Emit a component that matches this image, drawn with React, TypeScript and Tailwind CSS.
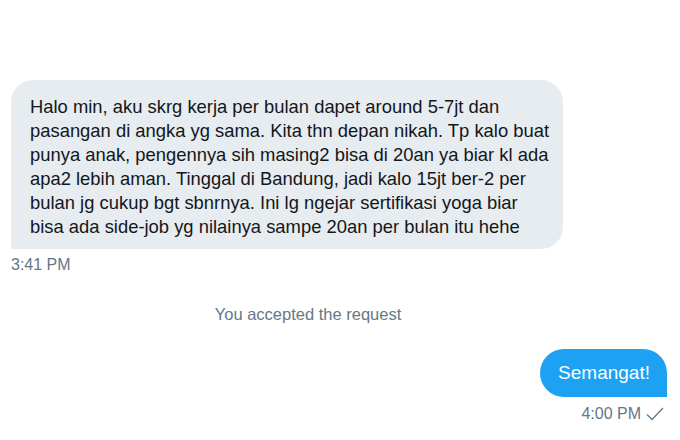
import React from "react";

const FONT = { fontFamily: '"Liberation Sans", Arial, sans-serif' };

const lines = [
  "Halo min, aku skrg kerja per bulan dapet around 5-7jt dan",
  "pasangan di angka yg sama. Kita thn depan nikah. Tp kalo buat",
  "punya anak, pengennya sih masing2 bisa di 20an ya biar kl ada",
  "apa2 lebih aman. Tinggal di Bandung, jadi kalo 15jt ber-2 per",
  "bulan jg cukup bgt sbnrnya. Ini lg ngejar sertifikasi yoga biar",
  "bisa ada side-job yg nilainya sampe 20an per bulan itu hehe",
];

export default function App() {
  return (
    <div className="w-[680px] h-[440px] bg-white overflow-hidden" style={FONT}>
      <div className="flex flex-col pt-[80px] px-[11px]">
        {/* Incoming message */}
        <div className="flex flex-col items-start">
          <div className="w-[552px] bg-[#e6ecf0] text-[#14171a] rounded-[22px] rounded-bl-none pl-[19px] pr-[10px] pt-[15px] pb-[10px] text-[18.4px] leading-[24px]">
            {lines.map((l) => (
              <div key={l} className="whitespace-nowrap">{l}</div>
            ))}
          </div>
          <div className="mt-[7px] text-[16px] leading-[18px] text-[#657786]">3:41 PM</div>
        </div>

        {/* System note */}
        <div className="mt-[30px] pr-[64px] text-center text-[16.5px] leading-[20px] text-[#657786]">
          You accepted the request
        </div>

        {/* Outgoing message */}
        <div className="mt-[25px] flex flex-col items-end pr-[2px]">
          <div className="bg-[#1da1f2] text-white rounded-[24px] rounded-br-none pl-[18px] pr-[17px] h-[48px] flex items-center text-[19px]">
            Semangat!
          </div>
          <div className="mt-[8px] flex items-center gap-[5px] pr-[3px] text-[16px] leading-[18px] text-[#657786]">
            <span>4:00 PM</span>
            <svg width="18" height="14" viewBox="0 0 18 14" fill="none" stroke="#657786" strokeWidth="1.3">
              <path d="M1 7.5 L6 12.5 L17 1" />
            </svg>
          </div>
        </div>
      </div>
    </div>
  );
}
